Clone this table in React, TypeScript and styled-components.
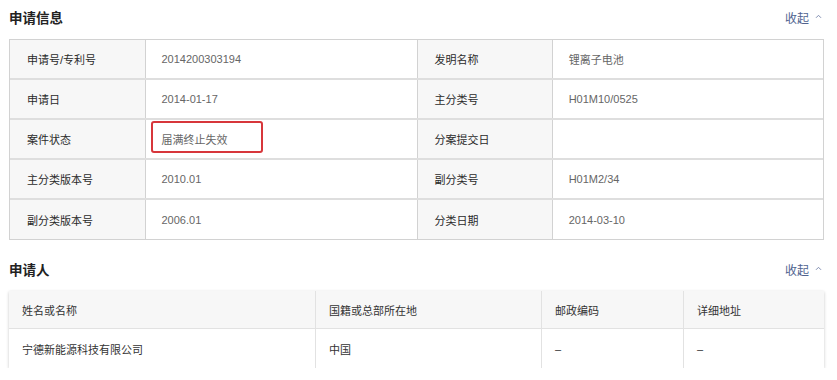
import {ReactNode} from "react";
import styled, {createGlobalStyle} from "styled-components";

type Field = {
    label: string;
    value?: string;
    marked?: boolean;
};

const fields: Field[][] = [
    [{label: '申请号/专利号', value: '2014200303194'}, {label: '发明名称', value: '锂离子电池'}],
    [{label: '申请日', value: '2014-01-17'}, {label: '主分类号', value: 'H01M10/0525'}],
    [{label: '案件状态', value: '届满终止失效', marked: true}, {label: '分案提交日'}],
    [{label: '主分类版本号', value: '2010.01'}, {label: '副分类号', value: 'H01M2/34'}],
    [{label: '副分类版本号', value: '2006.01'}, {label: '分类日期', value: '2014-03-10'}],
];

const applicantColumns = ['姓名或名称', '国籍或总部所在地', '邮政编码', '详细地址'];
const applicants = [['宁德新能源科技有限公司', '中国', '–', '–']];

const Section = ({title, children}: {title: string; children: ReactNode}) => (
    <SectionBox>
        <SectionHead>
            <h2>{title}</h2>
            <Toggle>
                收起
                <svg width="7" height="5" viewBox="0 0 7 5">
                    <polyline points="1,3.8 3.5,1.3 6,3.8" fill="none" stroke="currentColor" strokeWidth="1"/>
                </svg>
            </Toggle>
        </SectionHead>
        {children}
    </SectionBox>
);

export default function App() {
    return (
        <>
            <GlobalStyle/>
            <Page>
                <Section title="申请信息">
                    <InfoGrid>
                        {fields.map((row, i) => (
                            <InfoRow key={i} $last={i === fields.length - 1}>
                                {row.map(f => (
                                    <Pair key={f.label}>
                                        <Label>{f.label}</Label>
                                        <Value>
                                            {f.value}
                                            {f.marked ? <Mark/> : null}
                                        </Value>
                                    </Pair>
                                ))}
                            </InfoRow>
                        ))}
                    </InfoGrid>
                </Section>
                <Section title="申请人">
                    <Card>
                        <ApplicantRow $head>
                            {applicantColumns.map(c => <Cell key={c}>{c}</Cell>)}
                        </ApplicantRow>
                        {applicants.map((r, i) => (
                            <ApplicantRow key={i}>
                                {r.map((c, j) => <Cell key={j}>{c}</Cell>)}
                            </ApplicantRow>
                        ))}
                    </Card>
                </Section>
            </Page>
        </>
    );
}

const GlobalStyle = createGlobalStyle`
    body {
        margin: 0;
        background: #ffffff;
        font-family: "Liberation Sans", "Noto Sans CJK SC", sans-serif;
    }
`;

const Page = styled.div`
    width: 837px;
    padding: 0 13px 0 9px;
    box-sizing: border-box;
`;

const SectionBox = styled.section`
    & + & {
        margin-top: 12px;
    }
`;

const SectionHead = styled.div`
    height: 34px;
    margin-bottom: 5px;
    display: flex;
    align-items: center;
    justify-content: space-between;

    h2 {
        margin: 0;
        font-size: 13.5px;
        font-weight: 700;
        color: #222;
    }
`;

const Toggle = styled.span`
    display: flex;
    align-items: center;
    gap: 6px;
    padding-right: 2px;
    color: #50638f;
    font-size: 12px;

    svg {
        margin-top: -1px;
        color: #7f8db0;
    }
`;

const InfoGrid = styled.div`
    border: 1px solid #d2d2d2;
    border-bottom: none;
`;

const InfoRow = styled.div<{ $last?: boolean }>`
    display: grid;
    grid-template-columns: 1fr 1fr;
    height: 40px;
    box-sizing: border-box;
    border-bottom: ${p => p.$last ? '1px solid #d2d2d2' : '2px solid #dedede'};
`;

const Pair = styled.div`
    display: grid;
    grid-template-columns: 1fr 2fr;

    & + & {
        border-left: 1px solid #d2d2d2;
    }
`;

const Label = styled.div`
    display: flex;
    align-items: center;
    padding-left: 17px;
    background: #f7f7f7;
    border-right: 1px solid #d2d2d2;
    color: #2a2a2a;
    font-size: 11px;
`;

const Value = styled.div`
    position: relative;
    display: flex;
    align-items: center;
    padding-left: 16px;
    color: #666;
    font-size: 11px;
`;

const Mark = styled.span`
    position: absolute;
    left: 5px;
    top: 1px;
    width: 112px;
    height: 32px;
    box-sizing: border-box;
    border: 2px solid #d7363b;
    border-radius: 3px;
`;

const Card = styled.div`
    background: #fff;
    box-shadow: 0 1px 3px rgba(0, 0, 0, 0.22);
`;

const ApplicantRow = styled.div<{ $head?: boolean }>`
    display: grid;
    grid-template-columns: 306px 226px 142px 1fr;
    height: ${p => p.$head ? '38px' : '39px'};
    background: ${p => p.$head ? '#f7f7f7' : '#fff'};
    border-bottom: ${p => p.$head ? '1px solid #e2e2e2' : 'none'};
    box-sizing: border-box;
`;

const Cell = styled.div`
    display: flex;
    align-items: center;
    padding-left: 13px;
    color: #333;
    font-size: 11px;

    & + & {
        border-left: 1px solid #e2e2e2;
    }
`;
